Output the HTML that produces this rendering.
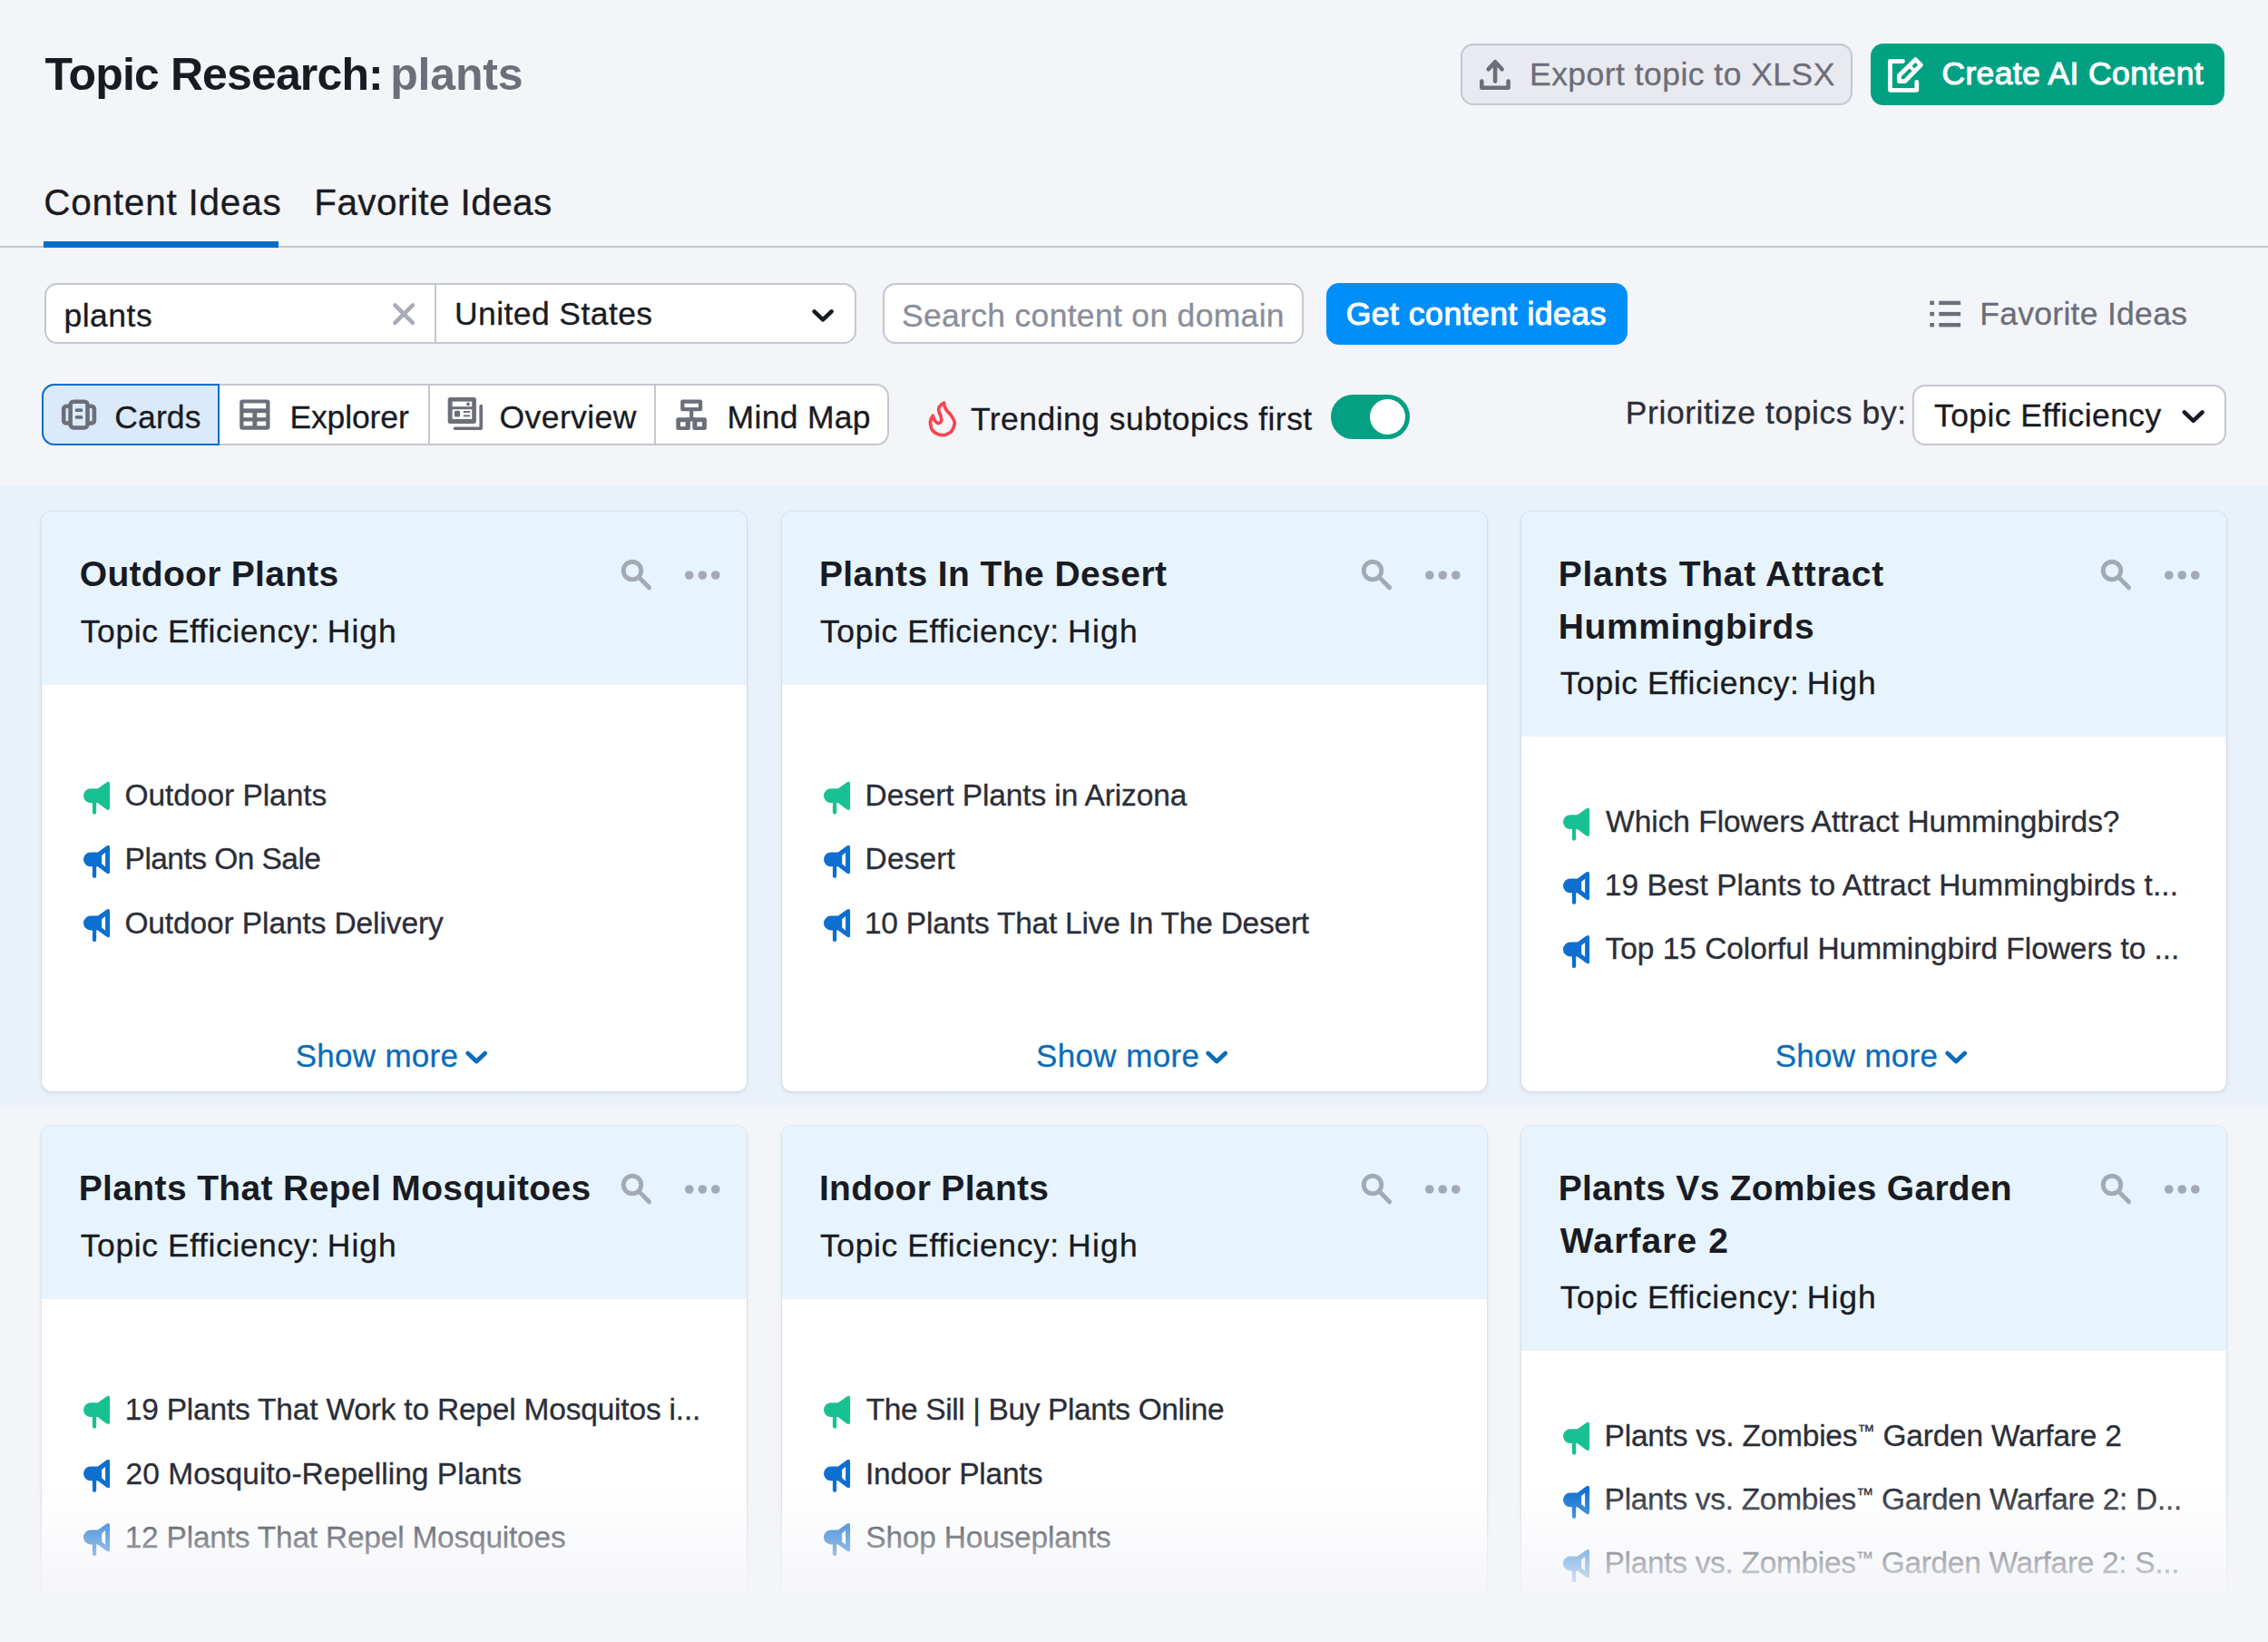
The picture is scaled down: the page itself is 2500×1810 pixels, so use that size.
<!DOCTYPE html>
<html lang="en"><head><meta charset="utf-8"><title>Topic Research: plants</title>
<style>
html,body{margin:0;padding:0}
body{width:2500px;height:1810px;position:relative;overflow:hidden;background:#f4f5f9;font-family:"Liberation Sans",sans-serif;color:#191b23}
.t{position:absolute;white-space:nowrap;line-height:1;margin:0;-webkit-text-stroke:.3px currentColor}
.t.bd{-webkit-text-stroke:0}
.b{position:absolute;box-sizing:border-box}
svg{position:absolute;overflow:visible}
.card{position:absolute;width:777px;height:639px;background:#fff;border-radius:11px;box-shadow:0 0 0 1px rgba(60,90,130,.08),0 2px 5px rgba(25,27,35,.09);overflow:hidden}
.card .hd{position:absolute;left:0;top:0;width:100%;background:#e7f4fe}
</style></head><body>

<div class="b" style="left:0;top:535.5px;width:2500px;height:691px;background:linear-gradient(to bottom,#e9f1fb 0,#e9f1fb 677px,rgba(233,241,251,0) 691px)"></div>
<div class="b" style="left:1610px;top:48px;width:432px;height:67.5px;border:2px solid #c4c7cf;border-radius:14px;background:#e9eaf0"></div>
<div class="b" style="left:2062px;top:48px;width:390px;height:67.5px;border-radius:14px;background:#00a182"></div>
<svg style="left:0;top:0" width="2500" height="130" fill="none" stroke="#6c6e79" stroke-width="4.6" stroke-linecap="round" stroke-linejoin="round"><path d="M1648.1 68.2V89.6M1640.6 76.2L1648.1 68.2L1655.6 76.2M1633.3 89.6V96.7H1662.6V89.6"/><g stroke="#fff" stroke-width="4.8"><path d="M2097.5 67.5H2083.5V99.3H2112.8V90.5"/><path d="M2093.4 89.6V83.2L2111.4 65.6L2117.4 71.6L2099.8 89.6Z"/><path d="M2105.2 73.2L2110.2 78.2" stroke-width="4"/></g></svg>
<div class="b" style="left:0;top:271px;width:2500px;height:2px;background:#c4c7cf"></div>
<div class="b" style="left:48.3px;top:266px;width:259px;height:7px;background:#006dca"></div>
<div class="b" style="left:48.6px;top:312.2px;width:895.2px;height:67px;border:2px solid #c4c7cf;border-radius:14px;background:#fff"></div>
<div class="b" style="left:479.2px;top:313px;width:2px;height:65.4px;background:#c4c7cf"></div>
<div class="b" style="left:972.8px;top:312.4px;width:464.5px;height:67px;border:2px solid #c4c7cf;border-radius:14px;background:#fff"></div>
<div class="b" style="left:1461.6px;top:311.9px;width:332px;height:67.9px;border-radius:14px;background:#008ff8"></div>
<svg style="left:0;top:300px" width="2500" height="200" fill="none" stroke-linecap="round" stroke-linejoin="round"><path d="M435.4 36.4L454.9 55.9M454.9 36.4L435.4 55.9" stroke="#a9abb6" stroke-width="4.6"/><path d="M897.6 43.4L907.1 52.4L916.6 43.4" stroke="#191b23" stroke-width="4.6"/><g fill="#6c6e79" stroke="none"><rect x="2127.3" y="31.7" width="4.7" height="4.4"/><rect x="2137.3" y="31.7" width="23.8" height="4.4"/><rect x="2127.3" y="43.9" width="4.7" height="4.4"/><rect x="2137.3" y="43.9" width="23.8" height="4.4"/><rect x="2127.3" y="56" width="4.7" height="4.4"/><rect x="2137.3" y="56" width="23.8" height="4.4"/></g></svg>
<div class="b" style="left:46.2px;top:423.4px;width:933.8px;height:67.4px;border:2px solid #c4c7cf;border-radius:14px;background:#fff"></div>
<div class="b" style="left:46.2px;top:423.4px;width:195.7px;height:67.4px;border:2px solid #006dca;border-radius:14px 0 0 14px;background:#dbeafa"></div>
<div class="b" style="left:471.9px;top:425px;width:2px;height:64px;background:#c4c7cf"></div>
<div class="b" style="left:721.2px;top:425px;width:2px;height:64px;background:#c4c7cf"></div>
<svg style="left:0;top:420px" width="1100" height="80" fill="none" stroke-linecap="round" stroke-linejoin="round"><g stroke="#6c6e79" stroke-width="4.6"><rect x="77.6" y="22.7" width="18.9" height="28.8" rx="3.5"/><path d="M76 27.7H73.2a3 3 0 0 0 -3 3V43.5a3 3 0 0 0 3 3H76M98 27.7H100.9a3 3 0 0 1 3 3V43.5a3 3 0 0 1 -3 3H98"/><path d="M84.5 32.2H89.5M84.5 39.9H89.5" stroke-width="3.7"/></g><rect x="264.2" y="20.4" width="33.3" height="33.4" rx="3" fill="#6c6e79"/><g fill="#fff"><rect x="268.5" y="24.4" width="24.7" height="5.9"/><rect x="268.5" y="35.2" width="9.9" height="5"/><rect x="283.3" y="35.2" width="9.9" height="5"/><rect x="268.5" y="44.5" width="9.9" height="4.9"/><rect x="283.3" y="44.5" width="9.9" height="4.9"/></g><rect x="493.7" y="18" width="31.2" height="29" rx="2.5" fill="#6c6e79"/><g fill="#fff"><rect x="498.6" y="22.6" width="21.6" height="5.6"/><rect x="498.6" y="31.2" width="21.6" height="10.8"/></g><g fill="#6c6e79"><rect x="500.9" y="32.8" width="6.2" height="6.8" rx="1.5"/><rect x="510.8" y="33" width="7.3" height="1.9"/><rect x="510.8" y="37.4" width="7.3" height="1.9"/><circle cx="516" cy="25.4" r="1.9"/></g><path d="M530.2 27.6V52.2H501.4" stroke="#6c6e79" stroke-width="3.6"/><g fill="#6c6e79"><rect x="750.2" y="20.5" width="24" height="12.8" rx="2.2"/><rect x="760.1" y="32" width="4.2" height="9"/><rect x="745.3" y="40.3" width="15.6" height="13.7" rx="2.2"/><rect x="763.4" y="40.3" width="15.5" height="13.7" rx="2.2"/><rect x="757" y="40.3" width="10" height="4.2"/></g><g fill="#fff"><rect x="754.4" y="24.8" width="15.5" height="4.3"/><rect x="750" y="45.2" width="5.6" height="4.9"/><rect x="768.4" y="45.2" width="5.6" height="4.9"/></g><path d="M1040.6 24.2C1040.8 25.4 1040.7 26.6 1041.2 28.0C1041.8 29.4 1042.7 31.2 1043.9 32.8C1045.0 34.3 1046.8 35.7 1048.1 37.5C1049.4 39.4 1051.1 42.1 1051.8 43.9C1052.5 45.6 1052.5 46.2 1052.1 48.1C1051.6 49.9 1050.5 53.2 1049.2 55.0C1047.8 56.7 1045.6 57.9 1043.9 58.7C1042.1 59.5 1040.7 59.8 1038.8 59.7C1037.0 59.6 1034.6 59.1 1032.8 58.1C1030.9 57.2 1028.7 55.7 1027.5 53.9C1026.3 52.2 1025.9 49.4 1025.6 47.6C1025.3 45.7 1025.4 44.3 1025.9 42.8C1026.3 41.3 1027.5 39.8 1028.3 38.3C1028.7 39.6 1028.9 41.1 1029.6 42.3C1030.2 43.5 1031.3 44.7 1032.2 45.4C1033.1 46.2 1034.0 46.7 1034.9 46.5C1035.7 46.3 1037.1 45.5 1037.5 44.4C1037.9 43.2 1037.7 41.5 1037.2 39.6C1036.8 37.8 1035.3 35.0 1034.9 33.3C1034.5 31.6 1034.4 30.8 1034.9 29.6C1035.3 28.4 1036.6 27.0 1037.5 26.1C1038.5 25.2 1039.6 24.8 1040.6 24.2Z" stroke="#fa4350" stroke-width="3.7"/></svg>
<div class="b" style="left:1466.8px;top:435.2px;width:87.1px;height:48.6px;border-radius:24.3px;background:#03a083"></div>
<div class="b" style="left:1509.8px;top:440.1px;width:39.2px;height:39.2px;border-radius:50%;background:#fff"></div>
<div class="b" style="left:2108.2px;top:423.6px;width:345.5px;height:67.2px;border:2px solid #c4c7cf;border-radius:14px;background:#fff"></div>
<svg style="left:2400px;top:440px" width="40" height="40" fill="none" stroke="#191b23" stroke-width="4.6" stroke-linecap="round" stroke-linejoin="round"><path d="M7.8 14.4L17.7 23.8L27.6 14.4"/></svg>
<div class="card" style="left:46px;top:564px"><div class="hd" style="height:190.5px"></div></div>
<svg style="left:46px;top:564px" width="777" height="639" fill="none"><circle cx="651" cy="65" r="9.75" stroke="#a4aab4" stroke-width="4.9"/><path d="M658.6 72.6L669.6 83.8" stroke="#a4aab4" stroke-width="4.9" stroke-linecap="round"/><g fill="#a5a9b5"><circle cx="713.8" cy="70" r="4.85"/><circle cx="728.3" cy="70" r="4.85"/><circle cx="742.8" cy="70" r="4.85"/></g><path transform="translate(46 297.3)" d="M7.9 7.9H15.8L25.4 1.1Q29.1 -1.2 29.1 3V29Q29.1 33.2 25.4 30.9L15.8 23.7H14.2V34.3A2.15 2.15 0 0 1 9.9 34.3V23.7H7.9A7.9 7.9 0 0 1 7.9 7.9Z" fill="#19c192"/><path transform="translate(46 367.5)" d="M7.9 7.9H15.8L25.4 1.1Q29.1 -1.2 29.1 3V29Q29.1 33.2 25.4 30.9L15.8 23.7H14.2V34.3A2.15 2.15 0 0 1 9.9 34.3V23.7H7.9A7.9 7.9 0 0 1 7.9 7.9ZM20.2 11.6L24.1 8.3V24.1L20.2 20.7Z" fill="#0d6fd0" fill-rule="evenodd"/><path transform="translate(46 437.7)" d="M7.9 7.9H15.8L25.4 1.1Q29.1 -1.2 29.1 3V29Q29.1 33.2 25.4 30.9L15.8 23.7H14.2V34.3A2.15 2.15 0 0 1 9.9 34.3V23.7H7.9A7.9 7.9 0 0 1 7.9 7.9ZM20.2 11.6L24.1 8.3V24.1L20.2 20.7Z" fill="#0d6fd0" fill-rule="evenodd"/><path d="M469.7 597L479.2 606L488.7 597" stroke="#0b6cb8" stroke-width="4.8" stroke-linecap="round" stroke-linejoin="round"/></svg>
<div class="card" style="left:861.8px;top:564px"><div class="hd" style="height:190.5px"></div></div>
<svg style="left:861.8px;top:564px" width="777" height="639" fill="none"><circle cx="651" cy="65" r="9.75" stroke="#a4aab4" stroke-width="4.9"/><path d="M658.6 72.6L669.6 83.8" stroke="#a4aab4" stroke-width="4.9" stroke-linecap="round"/><g fill="#a5a9b5"><circle cx="713.8" cy="70" r="4.85"/><circle cx="728.3" cy="70" r="4.85"/><circle cx="742.8" cy="70" r="4.85"/></g><path transform="translate(46 297.3)" d="M7.9 7.9H15.8L25.4 1.1Q29.1 -1.2 29.1 3V29Q29.1 33.2 25.4 30.9L15.8 23.7H14.2V34.3A2.15 2.15 0 0 1 9.9 34.3V23.7H7.9A7.9 7.9 0 0 1 7.9 7.9Z" fill="#19c192"/><path transform="translate(46 367.5)" d="M7.9 7.9H15.8L25.4 1.1Q29.1 -1.2 29.1 3V29Q29.1 33.2 25.4 30.9L15.8 23.7H14.2V34.3A2.15 2.15 0 0 1 9.9 34.3V23.7H7.9A7.9 7.9 0 0 1 7.9 7.9ZM20.2 11.6L24.1 8.3V24.1L20.2 20.7Z" fill="#0d6fd0" fill-rule="evenodd"/><path transform="translate(46 437.7)" d="M7.9 7.9H15.8L25.4 1.1Q29.1 -1.2 29.1 3V29Q29.1 33.2 25.4 30.9L15.8 23.7H14.2V34.3A2.15 2.15 0 0 1 9.9 34.3V23.7H7.9A7.9 7.9 0 0 1 7.9 7.9ZM20.2 11.6L24.1 8.3V24.1L20.2 20.7Z" fill="#0d6fd0" fill-rule="evenodd"/><path d="M469.7 597L479.2 606L488.7 597" stroke="#0b6cb8" stroke-width="4.8" stroke-linecap="round" stroke-linejoin="round"/></svg>
<div class="card" style="left:1677px;top:564px"><div class="hd" style="height:248.4px"></div></div>
<svg style="left:1677px;top:564px" width="777" height="639" fill="none"><circle cx="651" cy="65" r="9.75" stroke="#a4aab4" stroke-width="4.9"/><path d="M658.6 72.6L669.6 83.8" stroke="#a4aab4" stroke-width="4.9" stroke-linecap="round"/><g fill="#a5a9b5"><circle cx="713.8" cy="70" r="4.85"/><circle cx="728.3" cy="70" r="4.85"/><circle cx="742.8" cy="70" r="4.85"/></g><path transform="translate(46 326.3)" d="M7.9 7.9H15.8L25.4 1.1Q29.1 -1.2 29.1 3V29Q29.1 33.2 25.4 30.9L15.8 23.7H14.2V34.3A2.15 2.15 0 0 1 9.9 34.3V23.7H7.9A7.9 7.9 0 0 1 7.9 7.9Z" fill="#19c192"/><path transform="translate(46 396.5)" d="M7.9 7.9H15.8L25.4 1.1Q29.1 -1.2 29.1 3V29Q29.1 33.2 25.4 30.9L15.8 23.7H14.2V34.3A2.15 2.15 0 0 1 9.9 34.3V23.7H7.9A7.9 7.9 0 0 1 7.9 7.9ZM20.2 11.6L24.1 8.3V24.1L20.2 20.7Z" fill="#0d6fd0" fill-rule="evenodd"/><path transform="translate(46 466.7)" d="M7.9 7.9H15.8L25.4 1.1Q29.1 -1.2 29.1 3V29Q29.1 33.2 25.4 30.9L15.8 23.7H14.2V34.3A2.15 2.15 0 0 1 9.9 34.3V23.7H7.9A7.9 7.9 0 0 1 7.9 7.9ZM20.2 11.6L24.1 8.3V24.1L20.2 20.7Z" fill="#0d6fd0" fill-rule="evenodd"/><path d="M469.7 597L479.2 606L488.7 597" stroke="#0b6cb8" stroke-width="4.8" stroke-linecap="round" stroke-linejoin="round"/></svg>
<div class="card" style="left:46px;top:1241px"><div class="hd" style="height:190.5px"></div></div>
<svg style="left:46px;top:1241px" width="777" height="639" fill="none"><circle cx="651" cy="65" r="9.75" stroke="#a4aab4" stroke-width="4.9"/><path d="M658.6 72.6L669.6 83.8" stroke="#a4aab4" stroke-width="4.9" stroke-linecap="round"/><g fill="#a5a9b5"><circle cx="713.8" cy="70" r="4.85"/><circle cx="728.3" cy="70" r="4.85"/><circle cx="742.8" cy="70" r="4.85"/></g><path transform="translate(46 297.3)" d="M7.9 7.9H15.8L25.4 1.1Q29.1 -1.2 29.1 3V29Q29.1 33.2 25.4 30.9L15.8 23.7H14.2V34.3A2.15 2.15 0 0 1 9.9 34.3V23.7H7.9A7.9 7.9 0 0 1 7.9 7.9Z" fill="#19c192"/><path transform="translate(46 367.5)" d="M7.9 7.9H15.8L25.4 1.1Q29.1 -1.2 29.1 3V29Q29.1 33.2 25.4 30.9L15.8 23.7H14.2V34.3A2.15 2.15 0 0 1 9.9 34.3V23.7H7.9A7.9 7.9 0 0 1 7.9 7.9ZM20.2 11.6L24.1 8.3V24.1L20.2 20.7Z" fill="#0d6fd0" fill-rule="evenodd"/><path transform="translate(46 437.7)" d="M7.9 7.9H15.8L25.4 1.1Q29.1 -1.2 29.1 3V29Q29.1 33.2 25.4 30.9L15.8 23.7H14.2V34.3A2.15 2.15 0 0 1 9.9 34.3V23.7H7.9A7.9 7.9 0 0 1 7.9 7.9ZM20.2 11.6L24.1 8.3V24.1L20.2 20.7Z" fill="#0d6fd0" fill-rule="evenodd"/></svg>
<div class="card" style="left:861.8px;top:1241px"><div class="hd" style="height:190.5px"></div></div>
<svg style="left:861.8px;top:1241px" width="777" height="639" fill="none"><circle cx="651" cy="65" r="9.75" stroke="#a4aab4" stroke-width="4.9"/><path d="M658.6 72.6L669.6 83.8" stroke="#a4aab4" stroke-width="4.9" stroke-linecap="round"/><g fill="#a5a9b5"><circle cx="713.8" cy="70" r="4.85"/><circle cx="728.3" cy="70" r="4.85"/><circle cx="742.8" cy="70" r="4.85"/></g><path transform="translate(46 297.3)" d="M7.9 7.9H15.8L25.4 1.1Q29.1 -1.2 29.1 3V29Q29.1 33.2 25.4 30.9L15.8 23.7H14.2V34.3A2.15 2.15 0 0 1 9.9 34.3V23.7H7.9A7.9 7.9 0 0 1 7.9 7.9Z" fill="#19c192"/><path transform="translate(46 367.5)" d="M7.9 7.9H15.8L25.4 1.1Q29.1 -1.2 29.1 3V29Q29.1 33.2 25.4 30.9L15.8 23.7H14.2V34.3A2.15 2.15 0 0 1 9.9 34.3V23.7H7.9A7.9 7.9 0 0 1 7.9 7.9ZM20.2 11.6L24.1 8.3V24.1L20.2 20.7Z" fill="#0d6fd0" fill-rule="evenodd"/><path transform="translate(46 437.7)" d="M7.9 7.9H15.8L25.4 1.1Q29.1 -1.2 29.1 3V29Q29.1 33.2 25.4 30.9L15.8 23.7H14.2V34.3A2.15 2.15 0 0 1 9.9 34.3V23.7H7.9A7.9 7.9 0 0 1 7.9 7.9ZM20.2 11.6L24.1 8.3V24.1L20.2 20.7Z" fill="#0d6fd0" fill-rule="evenodd"/></svg>
<div class="card" style="left:1677px;top:1241px"><div class="hd" style="height:248.4px"></div></div>
<svg style="left:1677px;top:1241px" width="777" height="639" fill="none"><circle cx="651" cy="65" r="9.75" stroke="#a4aab4" stroke-width="4.9"/><path d="M658.6 72.6L669.6 83.8" stroke="#a4aab4" stroke-width="4.9" stroke-linecap="round"/><g fill="#a5a9b5"><circle cx="713.8" cy="70" r="4.85"/><circle cx="728.3" cy="70" r="4.85"/><circle cx="742.8" cy="70" r="4.85"/></g><path transform="translate(46 326.3)" d="M7.9 7.9H15.8L25.4 1.1Q29.1 -1.2 29.1 3V29Q29.1 33.2 25.4 30.9L15.8 23.7H14.2V34.3A2.15 2.15 0 0 1 9.9 34.3V23.7H7.9A7.9 7.9 0 0 1 7.9 7.9Z" fill="#19c192"/><path transform="translate(46 396.5)" d="M7.9 7.9H15.8L25.4 1.1Q29.1 -1.2 29.1 3V29Q29.1 33.2 25.4 30.9L15.8 23.7H14.2V34.3A2.15 2.15 0 0 1 9.9 34.3V23.7H7.9A7.9 7.9 0 0 1 7.9 7.9ZM20.2 11.6L24.1 8.3V24.1L20.2 20.7Z" fill="#0d6fd0" fill-rule="evenodd"/><path transform="translate(46 466.7)" d="M7.9 7.9H15.8L25.4 1.1Q29.1 -1.2 29.1 3V29Q29.1 33.2 25.4 30.9L15.8 23.7H14.2V34.3A2.15 2.15 0 0 1 9.9 34.3V23.7H7.9A7.9 7.9 0 0 1 7.9 7.9ZM20.2 11.6L24.1 8.3V24.1L20.2 20.7Z" fill="#0d6fd0" fill-rule="evenodd"/></svg>
<div class="t bd" style="left:49.6px;top:56.97px;font-size:50px;letter-spacing:-0.87px;font-weight:700;">Topic Research:</div>
<div class="t bd" style="left:430.28px;top:56.97px;font-size:50px;letter-spacing:-0.2px;font-weight:700;color:#6c6e79;">plants</div>
<div class="t" style="left:1686.02px;top:65.25px;font-size:35.5px;letter-spacing:0.46px;color:#6c6e79;">Export topic to XLSX</div>
<div class="t" style="left:2140.39px;top:63.95px;font-size:35.5px;letter-spacing:0.38px;color:#fff;-webkit-text-stroke:1.1px #fff;">Create AI Content</div>
<div class="t" style="left:48.18px;top:202.92px;font-size:40.5px;letter-spacing:0.78px;">Content Ideas</div>
<div class="t" style="left:346.23px;top:202.92px;font-size:40.5px;letter-spacing:0.42px;">Favorite Ideas</div>
<div class="t" style="left:70.42px;top:331.45px;font-size:35.5px;letter-spacing:0.5px;">plants</div>
<div class="t" style="left:500.95px;top:329.05px;font-size:35.5px;letter-spacing:0.42px;">United States</div>
<div class="t" style="left:994.02px;top:331.25px;font-size:35.5px;letter-spacing:0.31px;color:#8a8e9b;">Search content on domain</div>
<div class="t" style="left:1483.65px;top:328.55px;font-size:35.5px;letter-spacing:0.53px;color:#fff;-webkit-text-stroke:1.1px #fff;">Get content ideas</div>
<div class="t" style="left:2182.23px;top:328.75px;font-size:35.5px;letter-spacing:0.29px;color:#6c6e79;">Favorite Ideas</div>
<div class="t" style="left:126.34px;top:442.75px;font-size:35.5px;letter-spacing:0.09px;">Cards</div>
<div class="t" style="left:319.39px;top:442.75px;font-size:35.5px;letter-spacing:-0.12px;">Explorer</div>
<div class="t" style="left:550.6px;top:442.75px;font-size:35.5px;letter-spacing:0.4px;">Overview</div>
<div class="t" style="left:801.55px;top:442.75px;font-size:35.5px;letter-spacing:0.31px;">Mind Map</div>
<div class="t" style="left:1069.97px;top:445.25px;font-size:35.5px;letter-spacing:0.46px;">Trending subtopics first</div>
<div class="t" style="left:1791.81px;top:438.05px;font-size:35.5px;letter-spacing:0.57px;color:#2b2e38;">Prioritize topics by:</div>
<div class="t" style="left:2131.97px;top:440.65px;font-size:35.5px;letter-spacing:0.42px;">Topic Efficiency</div>
<div class="t bd" style="left:87.76px;top:612.99px;font-size:39px;letter-spacing:0.3px;font-weight:700;">Outdoor Plants</div>
<div class="t" style="left:88.76px;top:678.65px;font-size:35.5px;letter-spacing:0.58px;">Topic Efficiency:</div>
<div class="t" style="left:360.81px;top:678.65px;font-size:35.5px;letter-spacing:0.95px;">High</div>
<div class="t" style="left:137.39px;top:859.94px;font-size:33.5px;letter-spacing:-0.04px;color:#2b2e38;">Outdoor Plants</div>
<div class="t" style="left:137.6px;top:930.14px;font-size:33.5px;letter-spacing:-0.55px;color:#2b2e38;">Plants On Sale</div>
<div class="t" style="left:137.39px;top:1001.34px;font-size:33.5px;letter-spacing:-0.11px;color:#2b2e38;">Outdoor Plants Delivery</div>
<div class="t" style="left:325.76px;top:1146.07px;font-size:35px;letter-spacing:0.27px;color:#0b6cb8;">Show more</div>
<div class="t bd" style="left:902.92px;top:612.99px;font-size:39px;letter-spacing:0.43px;font-weight:700;">Plants In The Desert</div>
<div class="t" style="left:904.02px;top:678.65px;font-size:35.5px;letter-spacing:0.58px;">Topic Efficiency:</div>
<div class="t" style="left:1176.97px;top:678.65px;font-size:35.5px;letter-spacing:1.27px;">High</div>
<div class="t" style="left:953.6px;top:859.94px;font-size:33.5px;letter-spacing:-0.12px;color:#2b2e38;">Desert Plants in Arizona</div>
<div class="t" style="left:953.6px;top:930.14px;font-size:33.5px;letter-spacing:0.12px;color:#2b2e38;">Desert</div>
<div class="t" style="left:952.97px;top:1001.34px;font-size:33.5px;letter-spacing:-0.24px;color:#2b2e38;">10 Plants That Live In The Desert</div>
<div class="t" style="left:1141.92px;top:1146.07px;font-size:35px;letter-spacing:0.39px;color:#0b6cb8;">Show more</div>
<div class="t bd" style="left:1717.76px;top:612.99px;font-size:39px;letter-spacing:0.73px;font-weight:700;">Plants That Attract</div>
<div class="t bd" style="left:1717.76px;top:671.29px;font-size:39px;letter-spacing:0.62px;font-weight:700;">Hummingbirds</div>
<div class="t" style="left:1719.76px;top:736.25px;font-size:35.5px;letter-spacing:0.58px;">Topic Efficiency:</div>
<div class="t" style="left:1991.81px;top:736.25px;font-size:35.5px;letter-spacing:0.95px;">High</div>
<div class="t" style="left:1770.07px;top:888.54px;font-size:33.5px;letter-spacing:-0.04px;color:#2b2e38;">Which Flowers Attract Hummingbirds?</div>
<div class="t" style="left:1768.71px;top:958.74px;font-size:33.5px;letter-spacing:0.07px;color:#2b2e38;">19 Best Plants to Attract Hummingbirds t...</div>
<div class="t" style="left:1769.6px;top:1028.94px;font-size:33.5px;letter-spacing:-0.05px;color:#2b2e38;">Top 15 Colorful Hummingbird Flowers to ...</div>
<div class="t" style="left:1956.76px;top:1146.07px;font-size:35px;letter-spacing:0.27px;color:#0b6cb8;">Show more</div>
<div class="t bd" style="left:86.76px;top:1289.99px;font-size:39px;letter-spacing:0.36px;font-weight:700;">Plants That Repel Mosquitoes</div>
<div class="t" style="left:88.76px;top:1355.65px;font-size:35.5px;letter-spacing:0.58px;">Topic Efficiency:</div>
<div class="t" style="left:360.81px;top:1355.65px;font-size:35.5px;letter-spacing:0.95px;">High</div>
<div class="t" style="left:137.71px;top:1536.94px;font-size:33.5px;letter-spacing:-0.2px;color:#2b2e38;">19 Plants That Work to Repel Mosquitos i...</div>
<div class="t" style="left:138.55px;top:1608.14px;font-size:33.5px;letter-spacing:0.03px;color:#2b2e38;">20 Mosquito-Repelling Plants</div>
<div class="t" style="left:137.71px;top:1678.34px;font-size:33.5px;letter-spacing:-0.23px;color:#2b2e38;">12 Plants That Repel Mosquitoes</div>
<div class="t bd" style="left:902.92px;top:1289.99px;font-size:39px;letter-spacing:0.33px;font-weight:700;">Indoor Plants</div>
<div class="t" style="left:904.02px;top:1355.65px;font-size:35.5px;letter-spacing:0.58px;">Topic Efficiency:</div>
<div class="t" style="left:1176.97px;top:1355.65px;font-size:35.5px;letter-spacing:1.27px;">High</div>
<div class="t" style="left:954.76px;top:1536.94px;font-size:33.5px;letter-spacing:-0.39px;color:#2b2e38;">The Sill | Buy Plants Online</div>
<div class="t" style="left:953.97px;top:1608.14px;font-size:33.5px;letter-spacing:-0.16px;color:#2b2e38;">Indoor Plants</div>
<div class="t" style="left:954.34px;top:1678.34px;font-size:33.5px;letter-spacing:-0.22px;color:#2b2e38;">Shop Houseplants</div>
<div class="t bd" style="left:1717.76px;top:1289.99px;font-size:39px;letter-spacing:0.25px;font-weight:700;">Plants Vs Zombies Garden</div>
<div class="t bd" style="left:1719.86px;top:1348.29px;font-size:39px;letter-spacing:1.11px;font-weight:700;">Warfare 2</div>
<div class="t" style="left:1719.76px;top:1413.25px;font-size:35.5px;letter-spacing:0.58px;">Topic Efficiency:</div>
<div class="t" style="left:1991.81px;top:1413.25px;font-size:35.5px;letter-spacing:0.95px;">High</div>
<div class="t" style="left:1768.6px;top:1565.54px;font-size:33.5px;letter-spacing:-0.24px;color:#2b2e38;">Plants vs. Zombies<span style="font-size:.58em;vertical-align:.52em;line-height:0">™</span> Garden Warfare 2</div>
<div class="t" style="left:1768.6px;top:1635.74px;font-size:33.5px;letter-spacing:-0.31px;color:#2b2e38;">Plants vs. Zombies<span style="font-size:.58em;vertical-align:.52em;line-height:0">™</span> Garden Warfare 2: D...</div>
<div class="t" style="left:1768.6px;top:1705.94px;font-size:33.5px;letter-spacing:-0.33px;color:#2b2e38;">Plants vs. Zombies<span style="font-size:.58em;vertical-align:.52em;line-height:0">™</span> Garden Warfare 2: S...</div>
<div class="b" style="left:0;top:1640px;width:2500px;height:170px;background:linear-gradient(to bottom,rgba(244,245,249,0) 0,#f4f5f9 125px,#f4f5f9 170px)"></div>
</body></html>
